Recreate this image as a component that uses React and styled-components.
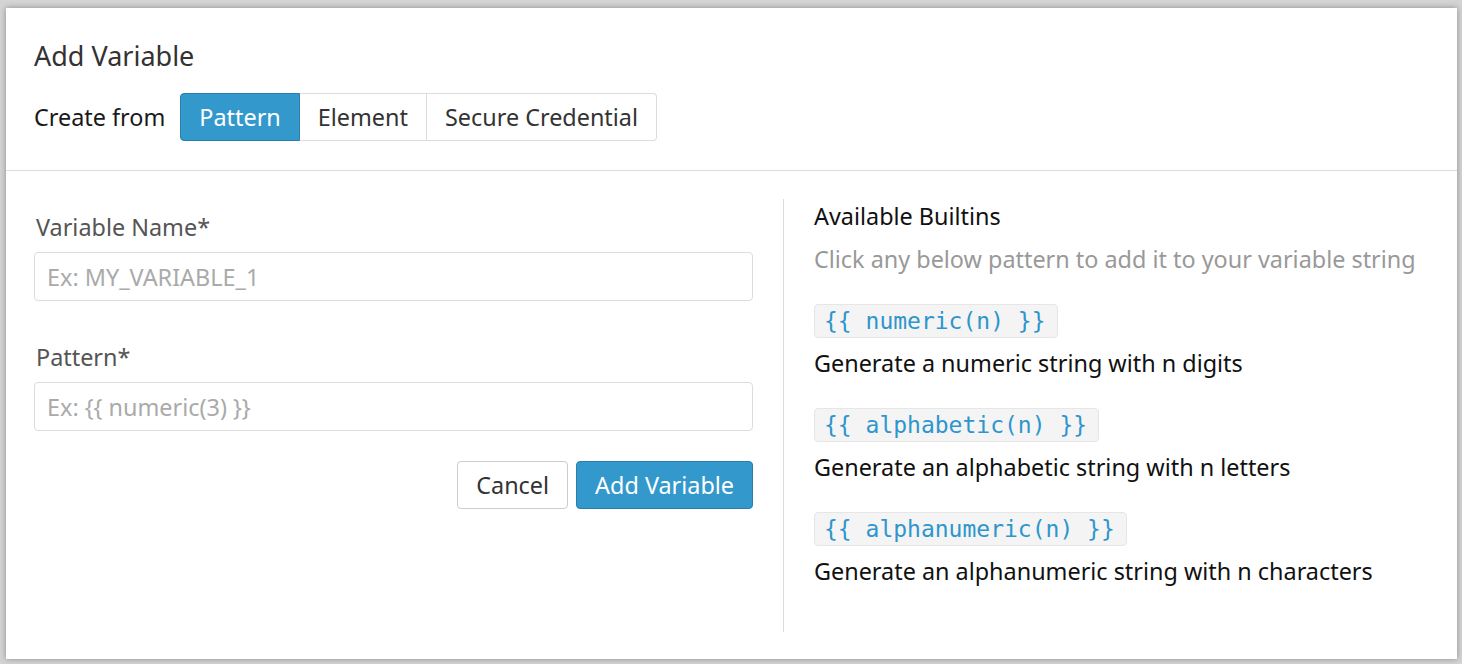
import React from 'react';
import styled, { createGlobalStyle } from 'styled-components';

const GlobalStyle = createGlobalStyle`
    html, body {
        margin: 0;
        padding: 0;
        background: #d4d4d4;
    }
    #root {
        padding: 8px 5px 5px 6px;
    }
    * {
        box-sizing: border-box;
    }
`;

const Modal = styled.div`
    height: 651px;
    background: #fff;
    box-shadow: 0 0 6px rgba(0, 0, 0, 0.35);
    display: flex;
    flex-direction: column;
    font-family: 'Noto Sans', 'Open Sans', sans-serif;
    font-size: 23.4px;
    line-height: 30px;
`;

const Header = styled.div`
    padding: 30px 28px 29px;
    border-bottom: 1px solid #dcdcdc;
`;

const Title = styled.h2`
    margin: 0 0 19px;
    font-size: 27px;
    line-height: 36px;
    font-weight: 400;
    color: #333;
`;

const SourceRow = styled.div`
    display: flex;
    align-items: center;
    gap: 15px;
    color: #1a1a1a;
`;

const ButtonGroup = styled.div`
    display: flex;
`;

const GroupButton = styled.button`
    height: 48px;
    padding: 0 18px;
    font: inherit;
    color: ${(p) => (p.active ? '#fff' : '#333')};
    background: ${(p) => (p.active ? '#3399cc' : '#fff')};
    border: 1px solid ${(p) => (p.active ? '#2b7fab' : '#dcdcdc')};
    border-left-width: ${(p) => (p.first ? '1px' : '0')};
    &:first-child {
        border-radius: 4px 0 0 4px;
    }
    &:last-child {
        border-radius: 0 4px 4px 0;
    }
`;

const Body = styled.div`
    flex: 1;
    display: flex;
    padding: 28px 28px 27px;
`;

const FormColumn = styled.div`
    flex: 0 0 749px;
    padding: 13px 30px 0 0;
    display: flex;
    flex-direction: column;
`;

const Label = styled.label`
    color: #555;
    padding-left: 2px;
    margin-bottom: 10px;
`;

const Input = styled.input`
    height: 49px;
    padding: 0 12px;
    font: inherit;
    color: #333;
    border: 1px solid #dcdcdc;
    border-radius: 4px;
    margin-bottom: ${(p) => p.gap}px;
    &::placeholder {
        color: #aaa;
    }
`;

const Actions = styled.div`
    display: flex;
    justify-content: flex-end;
    gap: 8px;
`;

const ActionButton = styled.button`
    height: 48px;
    padding: 0 18px;
    font: inherit;
    border-radius: 4px;
    color: ${(p) => (p.primary ? '#fff' : '#333')};
    background: ${(p) => (p.primary ? '#3399cc' : '#fff')};
    border: 1px solid ${(p) => (p.primary ? '#2b7fab' : '#ccc')};
`;

const BuiltinsColumn = styled.div`
    flex: 1;
    border-left: 1px solid #dcdcdc;
    padding: 2px 0 0 30px;
    color: #111;
`;

const Subtitle = styled.div`
    color: #999;
    margin-top: 13px;
`;

const Builtin = styled.div`
    margin-top: 30px;
`;

const Code = styled.code`
    display: inline-block;
    height: 34px;
    padding: 0 11px 0 9px;
    font-family: 'DejaVu Sans Mono', 'Liberation Mono', monospace;
    font-size: 23px;
    line-height: 32px;
    color: #2e96cc;
    background: #f4f4f4;
    border: 1px solid #e6e6e6;
    border-radius: 4px;
`;

const Description = styled.div`
    margin-top: 10px;
`;

const sources = ['Pattern', 'Element', 'Secure Credential'];

const builtins = [
    { code: '{{ numeric(n) }}', text: 'Generate a numeric string with n digits' },
    { code: '{{ alphabetic(n) }}', text: 'Generate an alphabetic string with n letters' },
    { code: '{{ alphanumeric(n) }}', text: 'Generate an alphanumeric string with n characters' },
];

const App = () => {
    return (
        <>
            <GlobalStyle />
            <Modal>
                <Header>
                    <Title>Add Variable</Title>
                    <SourceRow>
                        <span>Create from</span>
                        <ButtonGroup>
                            {sources.map((s, i) => (
                                <GroupButton key={s} active={i === 0} first={i === 0}>
                                    {s}
                                </GroupButton>
                            ))}
                        </ButtonGroup>
                    </SourceRow>
                </Header>
                <Body>
                    <FormColumn>
                        <Label>Variable Name*</Label>
                        <Input placeholder="Ex: MY_VARIABLE_1" gap={41} />
                        <Label>Pattern*</Label>
                        <Input placeholder="Ex: {{ numeric(3) }}" gap={30} />
                        <Actions>
                            <ActionButton>Cancel</ActionButton>
                            <ActionButton primary>Add Variable</ActionButton>
                        </Actions>
                    </FormColumn>
                    <BuiltinsColumn>
                        <div>Available Builtins</div>
                        <Subtitle>Click any below pattern to add it to your variable string</Subtitle>
                        {builtins.map((b) => (
                            <Builtin key={b.code}>
                                <Code>{b.code}</Code>
                                <Description>{b.text}</Description>
                            </Builtin>
                        ))}
                    </BuiltinsColumn>
                </Body>
            </Modal>
        </>
    );
};

export default App;
